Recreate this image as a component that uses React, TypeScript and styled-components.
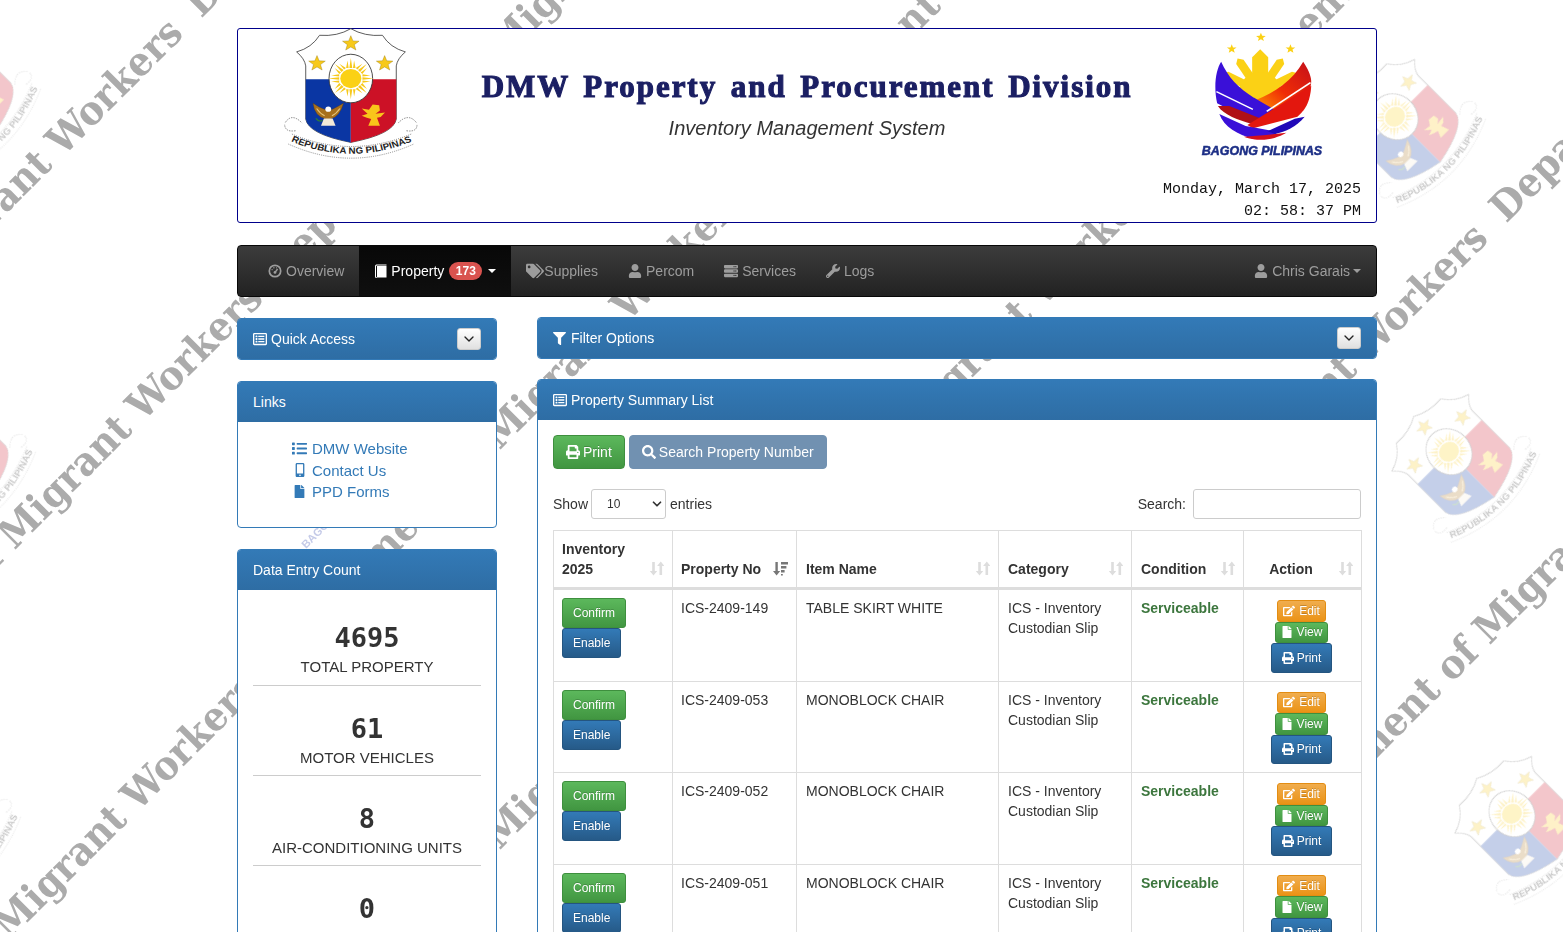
import React from "react";
import styled, { createGlobalStyle, css } from "styled-components";
import {
	FaEdit, FaFile, FaFilter, FaList, FaMobileAlt, FaPrint, FaRegListAlt,
	FaSearch, FaServer, FaTags, FaUser, FaWrench,
} from "react-icons/fa";
import { ChevronDown } from "lucide-react";

const GlobalStyle = createGlobalStyle`
	html { overflow: hidden; }
	body {
		margin: 0;
		background: #fff;
		color: #333;
		font-family: "Liberation Sans", Arial, sans-serif;
		font-size: 14px;
		line-height: 20px;
	}
	* { box-sizing: border-box; }
`;

const Backdrop = styled.div`
	position: fixed;
	inset: 0;
	overflow: hidden;
	z-index: -1;
`;
const BackdropText = styled.svg`
	position: absolute;
	inset: 0;
`;
const MarkText = styled.text`
	font-family: "DejaVu Serif", serif;
	font-weight: 700;
	fill: #ababab;
`;
const FaintText = styled.text`
	font-family: "Liberation Sans", sans-serif;
	font-weight: 700;
	fill: #c5cbe8;
`;
const BackdropSeal = styled.div`
	position: absolute;
	width: 140px;
	height: 133px;
	opacity: 0.24;
	filter: blur(0.5px);
	transform: rotate(-45deg);
`;

const Page = styled.div`
	width: 1140px;
	margin-left: 237px;
	padding-top: 28px;
`;

const Header = styled.header`
	display: grid;
	grid-template-columns: 1fr auto 1fr;
	height: 195px;
	background: #fff;
	border: 1px solid #00008b;
	border-radius: 3px;
`;
const SealCell = styled.div`
	padding-left: 43px;
	svg { display: block; margin-top: -3px; }
`;
const TitleCell = styled.div`
	padding-top: 40px;
	text-align: center;
`;
const Title = styled.h1`
	margin: 0;
	font-family: "Liberation Serif", serif;
	font-size: 31px;
	line-height: 36px;
	font-weight: 700;
	color: #1b1f63;
	letter-spacing: 1.95px;
	word-spacing: 4px;
	white-space: nowrap;
	-webkit-text-stroke: 1.1px #1b1f63;
`;
const Subtitle = styled.p`
	margin: 10px 0 0;
	font-size: 20px;
	line-height: 26px;
	font-style: italic;
	color: #333;
`;
const BrandCell = styled.div`
	display: flex;
	flex-direction: column;
	align-items: flex-end;
	padding-right: 15px;
	svg { display: block; margin: 1px 37px 0 0; }
`;
const Clock = styled.div`
	margin-top: 19px;
	font-family: "Liberation Mono", monospace;
	font-size: 15px;
	line-height: 22px;
	color: #111;
	text-align: right;
`;

const Navbar = styled.nav`
	display: flex;
	justify-content: space-between;
	height: 52px;
	margin-top: 22px;
	padding: 0 15px;
	background: linear-gradient(#3c3c3c, #222);
	border: 1px solid #080808;
	border-radius: 4px;
`;
const NavGroup = styled.div`
	display: flex;
`;
const NavItem = styled.a<{ $active?: boolean; $tight?: boolean }>`
	display: flex;
	align-items: center;
	gap: ${(p) => (p.$tight ? "0" : "4px")};
	padding: 0 15px;
	color: #9d9d9d;
	white-space: nowrap;
	svg { flex: none; }
	${(p) => p.$active && css`
		color: #fff;
		background: linear-gradient(#080808, #0f0f0f);
	`}
`;
const NavUser = styled(NavItem)`
	padding-right: 0;
`;
const Badge = styled.span`
	padding: 3px 6.5px;
	margin-left: 1px;
	background: #d9534f;
	border-radius: 10px;
	color: #fff;
	font-size: 12px;
	font-weight: 700;
	line-height: 12px;
`;
const Caret = styled.span<{ $near?: boolean }>`
	width: 0;
	height: 0;
	margin-left: ${(p) => (p.$near ? "-1px" : "2px")};
	border-top: 4px solid currentColor;
	border-left: 4px solid transparent;
	border-right: 4px solid transparent;
`;

const Columns = styled.div`
	display: grid;
	grid-template-columns: 260px 840px;
	column-gap: 40px;
	margin-top: 20px;
`;
const Side = styled.aside`
	display: flex;
	flex-direction: column;
	gap: 21px;
	padding-top: 1px;
`;
const Main = styled.main`
	display: flex;
	flex-direction: column;
	gap: 20px;
`;

const Panel = styled.section`
	background: #fff;
	border: 1px solid #337ab7;
	border-radius: 4px;
	overflow: hidden;
`;
const PanelHeading = styled.div`
	display: flex;
	align-items: center;
	justify-content: space-between;
	height: 40px;
	padding: 0 15px;
	background: linear-gradient(#337ab7, #2e6da4);
	color: #fff;
`;
const HeadingTitle = styled.span<{ $wide?: boolean }>`
	display: flex;
	align-items: center;
	gap: ${(p) => (p.$wide ? "5px" : "4px")};
`;
const Toggle = styled.button`
	display: flex;
	align-items: center;
	justify-content: center;
	width: 24px;
	height: 22px;
	padding: 0;
	color: #222;
	background: linear-gradient(#fff, #e0e0e0);
	border: 1px solid #ccc;
	border-radius: 3px;
`;

const LinkList = styled.ul`
	margin: 0;
	padding: 16px 0 24px 54px;
	list-style: none;
	font-size: 15px;
	line-height: 21.5px;
`;
const LinkItem = styled.li`
	display: flex;
	align-items: center;
	gap: 5px;
	color: #337ab7;
`;
const LinkIcon = styled.span`
	display: flex;
	justify-content: center;
	width: 15px;
`;

const StatList = styled.div`
	padding: 33px 15px 0;
`;
const Stat = styled.div`
	height: 90px;
	text-align: center;
	& + & { padding-top: 28px; }
	&:not(:last-child) { border-bottom: 1px solid #ccc; }
	&:first-child { height: 63px; }
`;
const StatValue = styled.div`
	font-family: "DejaVu Sans Mono", monospace;
	font-size: 27px;
	font-weight: 700;
	line-height: 30px;
`;
const StatLabel = styled.div`
	margin-top: 4px;
	font-size: 15px;
	line-height: 20px;
`;

const PanelBody = styled.div`
	padding: 15px;
`;
const Toolbar = styled.div`
	display: flex;
	gap: 4px;
`;
const variants = {
	success: css`
		background: linear-gradient(#5cb85c, #419641);
		border-color: #3e8f3e;
	`,
	primary: css`
		background: linear-gradient(#337ab7, #265a88);
		border-color: #245580;
	`,
	warning: css`
		background: linear-gradient(#f0ad4e, #eb9316);
		border-color: #e38d13;
	`,
};
const Button = styled.button<{ $kind: keyof typeof variants; $tall?: boolean; $slim?: boolean; $faded?: boolean }>`
	display: inline-flex;
	align-items: center;
	justify-content: center;
	gap: 3px;
	height: 30px;
	padding: 0 10px;
	color: #fff;
	font-family: inherit;
	font-size: 12px;
	border: 1px solid;
	border-radius: 3px;
	text-shadow: 0 -1px 0 rgba(0, 0, 0, 0.2);
	${(p) => variants[p.$kind]}
	${(p) => p.$slim && css`
		height: 22px;
		padding: 0 5px;
		gap: 4px;
	`}
	${(p) => p.$tall && css`
		height: 34px;
		padding: 0 12px;
		font-size: 14px;
		border-radius: 4px;
	`}
	${(p) => p.$faded && css`
		background: #7191b1;
		border-color: #7191b1;
		text-shadow: none;
	`}
`;

const TableControls = styled.div`
	display: flex;
	align-items: center;
	justify-content: space-between;
	margin-top: 20px;
`;
const ControlGroup = styled.label`
	display: flex;
	align-items: center;
	gap: 4px;
`;
const SelectBox = styled.span`
	display: flex;
	align-items: center;
	justify-content: space-between;
	width: 75px;
	height: 30px;
	margin-left: -1px;
	padding: 0 1px 0 15px;
	font-size: 12px;
	background: #fff;
	border: 1px solid #ccc;
	border-radius: 3px;
`;
const SearchBox = styled.input`
	width: 168px;
	height: 30px;
	margin-left: 3px;
	border: 1px solid #ccc;
	border-radius: 3px;
`;

const Table = styled.table`
	width: 808px;
	margin-top: 11px;
	table-layout: fixed;
	border-collapse: collapse;
	background: #fff;
	th:nth-child(n + 3), td:nth-child(n + 3) { padding-left: 9px; }
`;
const HeadCell = styled.th<{ $center?: boolean }>`
	position: relative;
	padding: 8px ${(p) => (p.$center ? "32px" : "24px")} 8px 8px;
	height: 58px;
	border: 1px solid #ddd;
	border-bottom: 3px solid #ddd;
	text-align: ${(p) => (p.$center ? "center" : "left")};
	vertical-align: bottom;
	font-size: 14px;
`;
const SortMark = styled.span<{ $active?: boolean }>`
	position: absolute;
	right: 8px;
	bottom: 11px;
	display: flex;
	color: ${(p) => (p.$active ? "#777" : "#ddd")};
`;
const Cell = styled.td`
	padding: 8px;
	border: 1px solid #ddd;
	vertical-align: top;
`;
const CondText = styled.strong`
	color: #3c763d;
`;
const StackStart = styled.div`
	display: flex;
	flex-direction: column;
	align-items: flex-start;
`;
const StackCenter = styled.div`
	display: flex;
	flex-direction: column;
	align-items: center;
	height: 74.6px;
	padding: 2px 3px 0 0;
`;

const star = (cx: number, cy: number, r: number) =>
	Array.from({ length: 10 }, (_, i) => {
		const a = (Math.PI / 5) * i - Math.PI / 2;
		const d = i % 2 ? r * 0.42 : r;
		return `${(cx + Math.cos(a) * d).toFixed(1)},${(cy + Math.sin(a) * d).toFixed(1)}`;
	}).join(" ");

function Seal() {
	return (
		<svg width="140" height="133" viewBox="120 20 385 400" preserveAspectRatio="none">
			<path d="M312 28 Q275 52 226 48 Q205 85 163 98 Q185 118 188 140 L188 300 Q195 345 312 370 Q430 345 437 300 L437 140 Q440 118 462 98 Q420 85 399 48 Q350 52 312 28Z" fill="#fff" stroke="#444" strokeWidth="2.5" />
			<path d="M188 180 H312 V370 Q195 345 188 300Z" fill="#0a36a3" />
			<path d="M312 180 H437 V300 Q430 345 312 370Z" fill="#cc1126" />
			<ellipse cx="312" cy="178" rx="60" ry="73" fill="#fff" stroke="#333" strokeWidth="2.5" />
			{[0, 45, 90, 135, 180, 225, 270, 315].map((a) => (
				<g key={a} transform={`rotate(${a} 312 178)`}>
					<path d="M308 146 L312 116 L316 146Z M299 146 L303 124 L306 146Z M318 146 L321 124 L325 146Z" fill="#f7c91a" />
				</g>
			))}
			<circle cx="312" cy="178" r="29" fill="#fbd115" />
			<polygon points={star(312, 73, 24)} fill="#f7c91a" stroke="#8a6d0a" strokeWidth="1" />
			<polygon points={star(219, 133, 24)} fill="#f7c91a" stroke="#8a6d0a" strokeWidth="1" />
			<polygon points={star(405, 133, 24)} fill="#f7c91a" stroke="#8a6d0a" strokeWidth="1" />
			<path d="M208 252 Q212 292 244 300 L256 300 Q282 292 292 252 Q270 266 258 272 L242 272 Q226 266 208 252Z" fill="#a8701c" stroke="#5b3a0c" strokeWidth="1" />
			<path d="M218 268 Q228 284 240 290 M282 268 Q272 284 260 290" stroke="#e8c77a" strokeWidth="3" fill="none" />
			<circle cx="250" cy="270" r="8" fill="#fff" />
			<path d="M238 298 H262 L270 320 H230Z" fill="#f3ead8" />
			<path d="M216 298 Q224 310 234 304" stroke="#2d7a3a" strokeWidth="4" fill="none" />
			<path d="M342 268 L362 272 L372 256 L390 258 L392 274 L380 284 L406 280 L394 294 L384 296 L392 320 L360 320 L368 300 L356 296 L342 290 L358 284Z" fill="#f9c51a" />
			<path d="M132 310 Q150 280 178 312 M160 335 Q130 340 130 315" stroke="#555" strokeWidth="2" strokeDasharray="4 3" fill="none" />
			<path d="M492 310 Q470 280 442 312 M465 335 Q495 340 494 315" stroke="#555" strokeWidth="2" strokeDasharray="4 3" fill="none" />
			<path d="M150 345 Q312 420 478 345" stroke="#555" strokeWidth="2" strokeDasharray="3 3" fill="none" />
			<path d="M140 375 Q312 460 485 375" stroke="#666" strokeWidth="2" strokeDasharray="3 3" fill="none" />
			<path id="sealArc" d="M150 368 Q312 440 478 368" fill="none" />
			<text fontFamily="Liberation Sans, sans-serif" fontSize="27" fontWeight="700" fill="#222">
				<textPath href="#sealArc" startOffset="50%" textAnchor="middle">REPUBLIKA NG PILIPINAS</textPath>
			</text>
		</svg>
	);
}

function BagongLogo() {
	return (
		<svg width="124" height="130" viewBox="1085 30 340 390" preserveAspectRatio="none">
			<defs>
				<linearGradient id="flame" x1="0" y1="1" x2="1" y2="0">
					<stop offset="0" stopColor="#ff9d00" />
					<stop offset="0.45" stopColor="#f02c06" />
					<stop offset="1" stopColor="#c4101a" />
				</linearGradient>
			</defs>
			<polygon points={star(1252, 52, 14)} fill="#fbd115" />
			<polygon points={star(1172, 87, 14)} fill="#fbd115" />
			<polygon points={star(1333, 87, 14)} fill="#fbd115" />
			{[-62, -32, 0, 32, 62].map((a) => (
				<path key={a} d={a === 0 ? "M1228 175 V112 L1250 88 L1272 112 V175Z" : "M1238 175 V110 L1250 98 L1262 110 V175Z"} transform={`rotate(${a} 1250 215)`} fill="#fbd115" />
			))}
			<circle cx="1250" cy="215" r="58" fill="#fbd115" />
			<path d="M1368 125 C1395 170 1392 190 1386 205 L1290 278 L1238 240 C1290 218 1340 180 1368 125Z" fill="url(#flame)" />
			<path d="M1143 125 C1170 190 1210 225 1310 280 L1300 300 L1240 312 L1132 250 C1122 200 1128 150 1143 125Z" fill="#3a10d8" />
			<path d="M1130 215 L1230 268" stroke="#fff" strokeWidth="4" />
			<path d="M1134 258 L1165 258 L1262 300 L1228 312 C1190 300 1150 285 1134 258Z" fill="#b01016" />
			<path d="M1390 197 C1387 250 1372 270 1352 290 L1230 325 L1215 315Z" fill="#e3170e" />
			<path d="M1388 188 L1268 274" stroke="#fff" strokeWidth="5" />
			<path d="M1138 282 C1150 320 1190 345 1230 356 L1280 350 L1300 336 L1210 318Z" fill="#3a10d8" />
			<path d="M1372 290 C1350 320 1320 335 1290 342 L1270 334 L1345 296Z" fill="#2008b8" />
			<path d="M1205 350 C1250 368 1290 358 1322 338 L1260 346Z" fill="#d5101a" />
			<text x="1090" y="405" fontFamily="Liberation Sans, sans-serif" fontSize="36" fontWeight="700" fontStyle="italic" fill="#1d2f86" stroke="#1d2f86" strokeWidth="1.5" textLength="330" lengthAdjust="spacingAndGlyphs">BAGONG PILIPINAS</text>
		</svg>
	);
}

// dashboard dial from the Overview tab
function DialIcon() {
	return (
		<svg width="14" height="14" viewBox="0 0 14 14">
			<circle cx="7" cy="7" r="5.7" fill="none" stroke="currentColor" strokeWidth="1.7" />
			<path d="M3.6 5.6h1M5.4 3.8h1M8.3 3.8h.6M7.2 8.2 9.6 5" stroke="currentColor" strokeWidth="1.4" fill="none" />
			<circle cx="7" cy="8.4" r="1.4" fill="currentColor" />
		</svg>
	);
}

// solid page block with a thin spine, like the Property tab's book
function BookIcon() {
	return (
		<svg width="13" height="14" viewBox="0 0 13 14" fill="currentColor">
			<path d="M3 2h9.5v11.5H3zM1 2.4C1 1 1.8.5 3 .5h9.5v1H3c-.7 0-1 .3-1 .9v10.2c0 .4.2.7.6.9H3v.5c-1.300 0-2-.5-2-1.600z" />
		</svg>
	);
}

function SortIcon() {
	return (
		<svg width="15" height="15" viewBox="0 0 15 15" fill="currentColor">
			<path d="M3.200 1h2.600v9h2.400l-3.700 4.600L.8 10h2.400zM11.800 .4l3.700 4.600h-2.400v9h-2.600V5H8.100z" />
		</svg>
	);
}

function SortActiveIcon() {
	return (
		<svg width="15" height="15" viewBox="0 0 15 15" fill="currentColor">
			<path d="M2.400 1h2.400v9h2.400L3.600 14.500 0 10h2.400zM8 1h7v2.400H8zM8 5h5.400v2.400H8zM8 9h3.600v2.400H8zM8 13h1.800v1.600H8z" />
		</svg>
	);
}

const WATERMARK = "Department of Migrant Workers";
const MARK_ENDS = [
	[185, 35], [675, -455],
	[265, 300], [755, -190],
	[260, 690], [750, 200], [1240, -290],
	[750, 600], [1165, 185], [1655, -305],
	[1490, 240], [1000, 730], [1980, -250],
	[1740, 395], [1250, 885],
];
const SEALS = [
	[-40, 82], [-45, 445], [-60, 810], [1405, 112], [1459, 447], [1522, 809],
];

const rows = [
	{ no: "ICS-2409-149", item: "TABLE SKIRT WHITE" },
	{ no: "ICS-2409-053", item: "MONOBLOCK CHAIR" },
	{ no: "ICS-2409-052", item: "MONOBLOCK CHAIR" },
	{ no: "ICS-2409-051", item: "MONOBLOCK CHAIR" },
];

const stats = [
	{ value: "4695", label: "TOTAL PROPERTY" },
	{ value: "61", label: "MOTOR VEHICLES" },
	{ value: "8", label: "AIR-CONDITIONING UNITS" },
	{ value: "0", label: "OFFICE EQUIPMENT" },
];

export default function App() {
	return (
		<>
			<GlobalStyle />
			<Backdrop>
				{SEALS.map(([x, y]) => (
					<BackdropSeal key={`${x}-${y}`} style={{ left: x - 70, top: y - 52 }}>
						<Seal />
					</BackdropSeal>
				))}
				<BackdropText width="1563" height="932">
					{MARK_ENDS.map(([x, y]) => (
						<MarkText key={`${x}-${y}`} transform={`translate(${x} ${y}) rotate(-45)`} textAnchor="end" fontSize="40" textLength="670" lengthAdjust="spacingAndGlyphs">
							{WATERMARK}
						</MarkText>
					))}
					<FaintText transform="translate(306 549) rotate(-45)" fontSize="11">BAGONG</FaintText>
				</BackdropText>
			</Backdrop>
			<Page>
				<Header>
					<SealCell><Seal /></SealCell>
					<TitleCell>
						<Title>DMW Property and Procurement Division</Title>
						<Subtitle>Inventory Management System</Subtitle>
					</TitleCell>
					<BrandCell>
						<BagongLogo />
						<Clock>Monday, March 17, 2025<br />02: 58: 37 PM</Clock>
					</BrandCell>
				</Header>

				<Navbar>
					<NavGroup>
						<NavItem><DialIcon />Overview</NavItem>
						<NavItem $active><BookIcon />Property <Badge>173</Badge><Caret /></NavItem>
						<NavItem $tight><FaTags size={18} />Supplies</NavItem>
						<NavItem><FaUser size={14} />Percom</NavItem>
						<NavItem><FaServer size={14} />Services</NavItem>
						<NavItem><FaWrench size={14} />Logs</NavItem>
					</NavGroup>
					<NavUser><FaUser size={14} />Chris Garais<Caret $near /></NavUser>
				</Navbar>

				<Columns>
					<Side>
						<Panel>
							<PanelHeading>
								<HeadingTitle><FaRegListAlt size={14} />Quick Access</HeadingTitle>
								<Toggle><ChevronDown size={16} /></Toggle>
							</PanelHeading>
						</Panel>
						<Panel>
							<PanelHeading>Links</PanelHeading>
							<LinkList>
								<LinkItem><LinkIcon><FaList size={15} /></LinkIcon>DMW Website</LinkItem>
								<LinkItem><LinkIcon><FaMobileAlt size={14} /></LinkIcon>Contact Us</LinkItem>
								<LinkItem><LinkIcon><FaFile size={13} /></LinkIcon>PPD Forms</LinkItem>
							</LinkList>
						</Panel>
						<Panel>
							<PanelHeading>Data Entry Count</PanelHeading>
							<StatList>
								{stats.map((s) => (
									<Stat key={s.label}>
										<StatValue>{s.value}</StatValue>
										<StatLabel>{s.label}</StatLabel>
									</Stat>
								))}
							</StatList>
						</Panel>
					</Side>

					<Main>
						<Panel>
							<PanelHeading>
								<HeadingTitle $wide><FaFilter size={13} />Filter Options</HeadingTitle>
								<Toggle><ChevronDown size={16} /></Toggle>
							</PanelHeading>
						</Panel>
						<Panel>
							<PanelHeading>
								<HeadingTitle><FaRegListAlt size={14} />Property Summary List</HeadingTitle>
							</PanelHeading>
							<PanelBody>
								<Toolbar>
									<Button $kind="success" $tall><FaPrint size={14} />Print</Button>
									<Button $kind="primary" $tall $faded><FaSearch size={14} />Search Property Number</Button>
								</Toolbar>
								<TableControls>
									<ControlGroup>
										Show
										<SelectBox>10<ChevronDown size={14} strokeWidth={3} /></SelectBox>
										entries
									</ControlGroup>
									<ControlGroup>
										Search:
										<SearchBox />
									</ControlGroup>
								</TableControls>
								<Table>
									<colgroup>
										<col width="119" /><col width="124" /><col width="202" />
										<col width="133" /><col width="112" /><col width="118" />
									</colgroup>
									<thead>
										<tr>
											<HeadCell>Inventory 2025<SortMark><SortIcon /></SortMark></HeadCell>
											<HeadCell>Property No<SortMark $active><SortActiveIcon /></SortMark></HeadCell>
											<HeadCell>Item Name<SortMark><SortIcon /></SortMark></HeadCell>
											<HeadCell>Category<SortMark><SortIcon /></SortMark></HeadCell>
											<HeadCell>Condition<SortMark><SortIcon /></SortMark></HeadCell>
											<HeadCell $center>Action<SortMark><SortIcon /></SortMark></HeadCell>
										</tr>
									</thead>
									<tbody>
										{rows.map((r) => (
											<tr key={r.no}>
												<Cell>
													<StackStart>
														<Button $kind="success">Confirm</Button>
														<Button $kind="primary">Enable</Button>
													</StackStart>
												</Cell>
												<Cell>{r.no}</Cell>
												<Cell>{r.item}</Cell>
												<Cell>ICS - Inventory Custodian Slip</Cell>
												<Cell><CondText>Serviceable</CondText></Cell>
												<Cell>
													<StackCenter>
														<Button $kind="warning" $slim><FaEdit size={12} />Edit</Button>
														<Button $kind="success" $slim><FaFile size={12} />View</Button>
														<Button $kind="primary"><FaPrint size={12} />Print</Button>
													</StackCenter>
												</Cell>
											</tr>
										))}
									</tbody>
								</Table>
							</PanelBody>
						</Panel>
					</Main>
				</Columns>
			</Page>
		</>
	);
}
